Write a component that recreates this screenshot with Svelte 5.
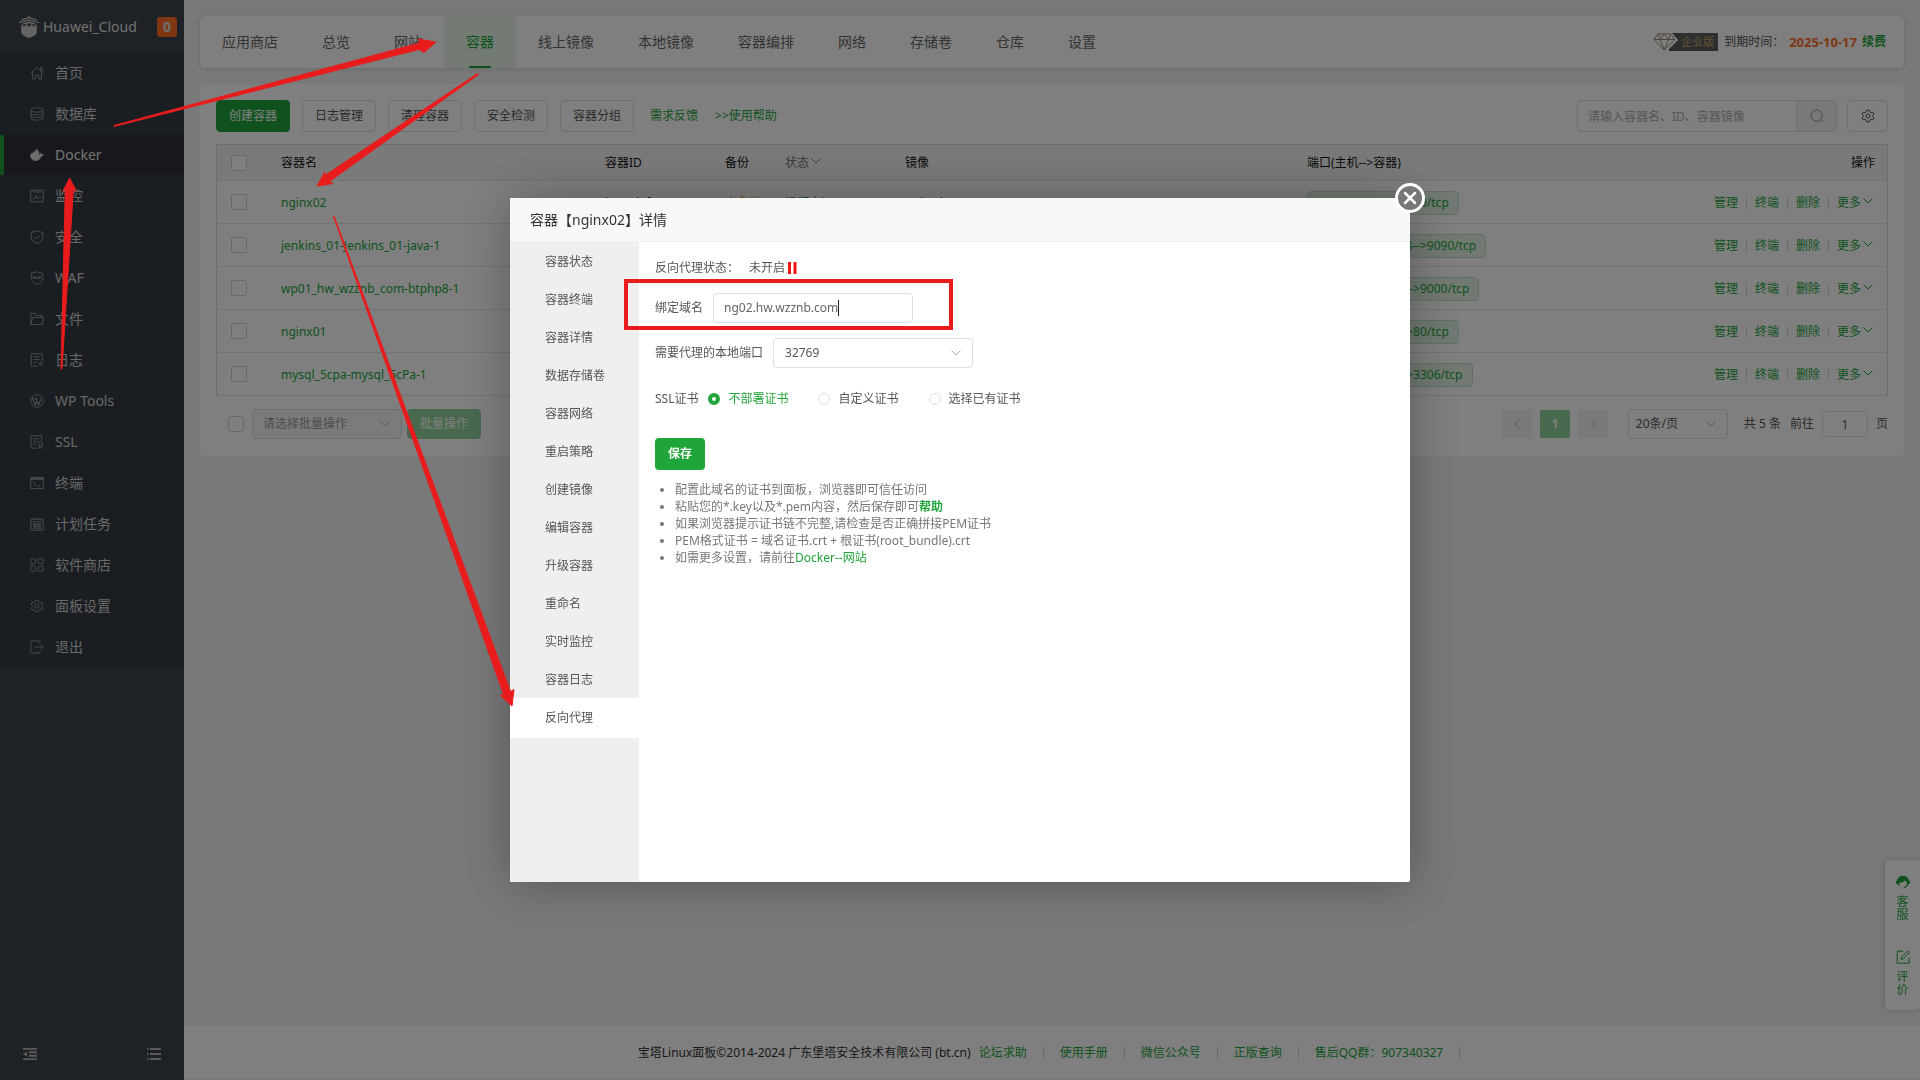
<script>
  const menu = [
    { name: '首页', icon: 'home' },
    { name: '数据库', icon: 'db' },
    { name: 'Docker', icon: 'docker', active: true },
    { name: '监控', icon: 'monitor' },
    { name: '安全', icon: 'shield' },
    { name: 'WAF', icon: 'waf' },
    { name: '文件', icon: 'folder' },
    { name: '日志', icon: 'log' },
    { name: 'WP Tools', icon: 'wp' },
    { name: 'SSL', icon: 'ssl' },
    { name: '终端', icon: 'terminal' },
    { name: '计划任务', icon: 'calendar' },
    { name: '软件商店', icon: 'apps' },
    { name: '面板设置', icon: 'gear' },
    { name: '退出', icon: 'exit' },
  ];
  const tabs = ['应用商店', '总览', '网站', '容器', '线上镜像', '本地镜像', '容器编排', '网络', '存储卷', '仓库', '设置'];
  const tools = ['日志管理', '清理容器', '安全检测', '容器分组'];
  const rows = [
    { name: 'nginx02', id: 'b1c7d0fa3e52', image: 'nginx:latest', port: '10.0.0.2:32769-->80/tcp' },
    { name: 'jenkins_01-Jenkins_01-java-1', id: '4e9a1c07d2b8', image: 'jenkins:lts', port: '127.0.0.10:32768-->9090/tcp' },
    { name: 'wp01_hw_wzznb_com-btphp8-1', id: '90ac3d5e71f4', image: 'btphp:8', port: '127.0.0.1:32770-->9000/tcp' },
    { name: 'nginx01', id: 'c25f80e9ab13', image: 'nginx:latest', port: '10.0.0.2:32768-->80/tcp' },
    { name: 'mysql_5cpa-mysql_5cPa-1', id: '7d63b0a4ce91', image: 'mysql:8', port: '10.0.0.2:33060-->3306/tcp' },
  ];
  const actions = ['管理', '终端', '删除'];
  const panes = ['容器状态', '容器终端', '容器详情', '数据存储卷', '容器网络', '重启策略', '创建镜像', '编辑容器', '升级容器', '重命名', '实时监控', '容器日志', '反向代理'];
  const certs = ['不部署证书', '自定义证书', '选择已有证书'];
  const footLinks = ['论坛求助', '使用手册', '微信公众号', '正版查询', '售后QQ群：907340327'];
  let domain = $state('ng02.hw.wzznb.com');
  let cert = $state('不部署证书');
</script>

{#snippet chevron()}
  <svg class="chev" viewBox="0 0 10 6" aria-hidden="true"><path d="M.5 .5 5 5 9.500 .5" /></svg>
{/snippet}

{#snippet gearIcon()}
  <path d="M5.8 1.2h2.4l.5 1.7 1.2.7 1.8-.5 1.2 2.1-1.3 1.2v1.3l1.3 1.2-1.2 2.1-1.8-.5-1.2.7-.5 1.7H5.8l-.5-1.7-1.2-.7-1.8.5-1.2-2.1 1.3-1.2V6.4L1.1 5.2l1.2-2.1 1.8.5 1.2-.7z" /><circle cx="7" cy="7" r="2" />
{/snippet}

<div class="page">
  <aside class="side">
    <header class="brand">
      <svg class="logo" viewBox="0 0 20 22" aria-hidden="true">
        <path d="M9.200 0h1.600v1.200L18 3.400v1L10 2.200 2 4.400v-1l7.200-2.200z" />
        <path d="M10 3.200 20 6v1.200L10 4.600 0 7.200V6z" />
        <path d="M10 5.600 16 7.200v1.400L10 7.200 4 8.600V7.200z" />
        <path d="M2.200 9 4.200 8.600v1.800h1.800V9l2.600-.8v2h2.800v-2L14 9v1.400h1.800V8.600l2 .4v7c0 2.800-3.400 4.400-7.800 6-4.400-1.600-7.800-3.200-7.800-6z" />
      </svg>
      <span class="host">Huawei_Cloud</span>
      <span class="count">0</span>
    </header>
    <nav class="menu">
      {#each menu as m}
        <a href="#menu" class:active={m.active}>
          <svg viewBox="0 0 14 14" aria-hidden="true" class:solid={m.icon === 'docker'}>
            {#if m.icon === 'home'}<path d="M.8 7.4 7 1.2l6.2 6.2M10.6 4.6V1.6h1.6v4.6M2.6 6v7h2.8V9h3.2v4h2.8V6" />
            {:else if m.icon === 'db'}<ellipse cx="7" cy="3" rx="6" ry="2.2" /><path d="M1 3v8c0 1.2 2.7 2.2 6 2.2s6-1 6-2.2V3M1 5.7c0 1.2 2.7 2.2 6 2.2s6-1 6-2.2M1 8.4c0 1.2 2.7 2.2 6 2.2s6-1 6-2.2" />
            {:else if m.icon === 'docker'}<path d="M0 6.600h1.400V4.800h2.200V3.200h2V1.200h2.200v2h1.400v3.400h.8c.5-.4.2-1.500.8-2 .8.600 1 1.200 1 1.800.7-.1 1.500 0 2.200.4-.5 1-1.500 1.400-2.500 1.400-1 2.900-2.900 4.700-6 4.700C2 12.900 0 10 0 6.600z" />
            {:else if m.icon === 'monitor'}<path d="M.8 1.200h12.400v11.600H.8zM4 1.200V3h6V1.200M2.600 9.600h2l1.400-3 1.600 3.400 1.600-2.600 1 1.200h1.400" />
            {:else if m.icon === 'shield'}<path d="M7 .7 12.800 2.600v5c0 2.700-2.300 4.600-5.800 5.800-3.500-1.200-5.800-3.100-5.800-5.800v-5zM4.300 6.900l2 2 3.600-3.600" />
            {:else if m.icon === 'waf'}<path d="M7 .7 12.800 2.600v5c0 2.700-2.300 4.600-5.800 5.800-3.500-1.200-5.800-3.100-5.800-5.800v-5zM3 5.400l.7 2.400.8-2 .8 2L6 5.400M6.600 8l1-2.600 1 2.600M9.600 8V5.600H11.200M9.600 6.800h1.300" />
            {:else if m.icon === 'folder'}<path d="M.8 12.600V1.400h4.400l1.400 2h5.200v2M.8 12.600 2.600 5.400h10.800l-1 7.200z" />
            {:else if m.icon === 'log'}<path d="M8 13.200H1.200V.8h11V8M3.400 3.800h6.400M3.400 6.600h6.400M3.400 9.400h3.800" /><circle cx="11" cy="10.800" r="1.500" />
            {:else if m.icon === 'wp'}<circle cx="7" cy="7" r="6.300" /><path class="thick" d="M2.400 4.400 5 11l2-5.400M5.400 4.400 8.600 11l2.600-6.600M1.800 4.400h2M4.800 4.400h2.600" />
            {:else if m.icon === 'ssl'}<path d="M7 13.200H1V.8h10.600v5M3 3.800h6.400M3 6.400h4.800M3 9h3.400" /><circle cx="10.600" cy="8.800" r="2" /><path d="M9.400 10.600v2.800l1.200-.8 1.400.8v-2.800" />
            {:else if m.icon === 'terminal'}<path d="M.8 1.400h12.400v11.200H.8zM.8 3.400h12.400M.8 2.400h12.400M3.600 5.800l2.200 1.800-2.200 1.800M6.800 10h3.600" />
            {:else if m.icon === 'calendar'}<path d="M.8 2.200h12.400v11H.8zM4 .6v2M7 .6v2M10 .6v2M.8 4.800h12.400M3 7.200h8M3 9.200h8M3 11.200h8M4.600 6v6M7.200 6v6M9.800 6v6" />
            {:else if m.icon === 'apps'}<rect x=".8" y=".8" width="5" height="5" rx="1" /><rect x="8.200" y=".8" width="5" height="5" rx="1" /><rect x=".8" y="8.200" width="5" height="5" rx="1" /><rect x="8.200" y="8.200" width="5" height="5" rx="1" />
            {:else if m.icon === 'gear'}{@render gearIcon()}
            {:else}<path d="M9.800 3.600V1.800c0-.6-.4-1-1-1H1.800c-.6 0-1 .4-1 1v10.400c0 .6.400 1 1 1h7c.6 0 1-.4 1-1v-1.800M5 7h8M10.600 4.400 13.200 7l-2.600 2.600" />{/if}
          </svg>
          {m.name}
        </a>
      {/each}
    </nav>
    <div class="side-foot">
      <button aria-label="收起菜单"><svg viewBox="0 0 14 12" aria-hidden="true"><path d="M0 .8h14M6 4.300h8M6 7.700h8M0 11.200h14" /><path class="tri" d="M0 6 4 3.600v4.800z" /></svg></button>
      <button aria-label="菜单列表"><svg viewBox="0 0 14 12" aria-hidden="true"><path d="M0 1h1.600M3 1h11M0 6h1.600M3 6h11M0 11h1.600M3 11h11" /></svg></button>
    </div>
  </aside>

  <main class="main">
    <div class="card topbar">
      <nav class="tabs">
        {#each tabs as t}<a href="#tab" class:active={t === '容器'}>{t}</a>{/each}
      </nav>
      <div class="license">
        <span class="edition">
          <svg viewBox="0 0 24 18" aria-hidden="true"><path class="halo" d="M5 1h13l5 6-11 11L1 7z" /><path d="M5 1h12.500l4.500 5.500L11.300 17 1 6.500zM1 6.500h21M7 6.500 11.300 17 15.600 6.500M5 1l2 5.500L11.300 1l4.300 5.500 2-5.500" /></svg>
          <span>企业版</span>
        </span>
        <span>到期时间：</span>
        <strong class="date">2025-10-17</strong>
        <a class="renew" href="#renew">续费</a>
      </div>
    </div>

    <section class="card content">
      <div class="tools">
        <button class="btn primary">创建容器</button>
        {#each tools as t}<button class="btn">{t}</button>{/each}
        <a class="help" href="#feedback">需求反馈</a>
        <a class="help" href="#help">&gt;&gt;使用帮助</a>
        <div class="search">
          <div class="query">
            <input type="text" aria-label="搜索容器" placeholder="请输入容器名、ID、容器镜像" />
            <button aria-label="搜索"><svg viewBox="0 0 14 14" aria-hidden="true"><circle cx="6.600" cy="6.600" r="5.600" /><path d="M10.800 10.800 13 13" /></svg></button>
          </div>
          <button class="btn square" aria-label="设置"><svg viewBox="0 0 14 14" aria-hidden="true">{@render gearIcon()}</svg></button>
        </div>
      </div>

      <div class="table-box">
        <table>
          <colgroup><col class="c-check" /><col class="c-name" /><col class="c-id" /><col class="c-backup" /><col class="c-state" /><col class="c-image" /><col /></colgroup>
          <thead>
            <tr>
              <th><input type="checkbox" aria-label="全选" /></th>
              <th>容器名</th><th>容器ID</th><th>备份</th>
              <th class="soft">状态{@render chevron()}</th>
              <th>镜像</th>
              <th><div class="split"><span>端口(主机--&gt;容器)</span><span>操作</span></div></th>
            </tr>
          </thead>
          <tbody>
            {#each rows as r}
              <tr>
                <td><input type="checkbox" aria-label={'选择 ' + r.name} /></td>
                <td><a href="#detail">{r.name}</a></td>
                <td class="dark">{r.id}</td>
                <td class="orange">未备份</td>
                <td><a href="#state">运行中▶</a></td>
                <td class="dark">{r.image}</td>
                <td>
                  <div class="split">
                    <span class="port">{r.port}</span>
                    <span class="acts">
                      {#each actions as a}<a href="#action">{a}</a><i></i>{/each}
                      <a class="more" href="#more">更多{@render chevron()}</a>
                    </span>
                  </div>
                </td>
              </tr>
            {/each}
          </tbody>
        </table>
      </div>

      <div class="below">
        <input type="checkbox" aria-label="全选本页" />
        <div class="select batch">
          <select aria-label="批量操作类型" disabled><option>请选择批量操作</option></select>
          {@render chevron()}
        </div>
        <button class="btn primary faded" disabled>批量操作</button>
        <div class="pager">
          <button class="pg" aria-label="上一页"><svg viewBox="0 0 6 10" aria-hidden="true"><path d="M5 .8 1 5l4 4.200" /></svg></button>
          <button class="pg now">1</button>
          <button class="pg" aria-label="下一页"><svg viewBox="0 0 6 10" aria-hidden="true"><path d="M1 .8 5 5 1 9.200" /></svg></button>
          <div class="select size">
            <select aria-label="每页条数"><option>20条/页</option></select>
            {@render chevron()}
          </div>
          <span class="total">共 5 条</span>
          <label>前往 <input type="text" value="1" /> 页</label>
        </div>
      </div>
    </section>

    <footer class="foot">
      <span>宝塔Linux面板©2014-2024 广东堡塔安全技术有限公司 (bt.cn)</span>
      {#each footLinks as l}<a href="#foot">{l}</a><i></i>{/each}
    </footer>
  </main>
</div>

<div class="float">
  <a href="#service">
    <svg viewBox="0 0 14 14" aria-hidden="true"><path class="fill" d="M7 .8c3.200 0 5.400 1.900 5.800 4.400.8.300 1.200 1 1.200 2s-.6 1.900-1.600 2C11.600 11.400 10 13 7.600 13.200v-1c1.500-.3 2.600-1.400 3.100-2.800l.3-2.600C9.800 6.800 9 6.400 8.600 5.600 7.400 7 5.600 7.800 3.200 8c0 1.200.3 2 .8 2.800C2.700 10.400 1.900 9.900 1.600 9.200.6 9.100 0 8.200 0 7.200s.4-1.700 1.200-2C1.600 2.700 3.800.8 7 .8z" /></svg>
    <span>客服</span>
  </a>
  <a href="#rate">
    <svg viewBox="0 0 14 14" aria-hidden="true"><path d="M7 1.200H1.200v12h12V7.400M5 9.400l.5-2.300L11.600 1l1.700 1.700-6.100 6.200z" /></svg>
    <span>评价</span>
  </a>
</div>

<div class="mask">
  <div class="dialog" role="dialog" aria-labelledby="dlg-title">
    <h2 id="dlg-title">容器【nginx02】详情</h2>
    <button class="close" aria-label="关闭"><svg viewBox="0 0 14 14" aria-hidden="true"><path d="M2 2 12 12M12 2 2 12" /></svg></button>
    <div class="body">
      <nav class="panes">
        {#each panes as p}<a href="#pane" class:active={p === '反向代理'}>{p}</a>{/each}
      </nav>
      <form class="form" onsubmit={(e) => e.preventDefault()}>
        <div class="line"><span>反向代理状态：</span><span class="off">未开启<svg viewBox="0 0 10 12" aria-hidden="true"><path d="M1 0h3v12H1zM6.500 0h3v12h-3z" /></svg></span></div>
        <div class="line">
          <label for="domain">绑定域名</label>
          <span class="box"><input id="domain" type="text" bind:value={domain} /><i class="caret"></i></span>
        </div>
        <div class="line">
          <label for="port">需要代理的本地端口</label>
          <div class="select port-pick">
            <select id="port"><option>32769</option></select>
            {@render chevron()}
          </div>
        </div>
        <div class="line ssl">
          <span>SSL证书</span>
          <div class="radios">
            {#each certs as c}
              <label class:on={cert === c}><input type="radio" name="cert" value={c} bind:group={cert} />{c}</label>
            {/each}
          </div>
        </div>
        <button class="save">保存</button>
        <ul>
          <li>配置此域名的证书到面板，浏览器即可信任访问</li>
          <li>粘贴您的*.key以及*.pem内容，然后保存即可<a href="#cert-help"><b>帮助</b></a></li>
          <li>如果浏览器提示证书链不完整,请检查是否正确拼接PEM证书</li>
          <li>PEM格式证书 = 域名证书.crt + 根证书(root_bundle).crt</li>
          <li>如需更多设置，请前往<a href="#sites">Docker--网站</a></li>
        </ul>
      </form>
    </div>
  </div>
</div>

<svg class="marks" viewBox="0 0 1920 1080" aria-hidden="true">
  <path d="M114 126.500 419 49.500 424 52.500 436 42 418.500 39 419.500 43 114 125.500z" />
  <path d="M477.500 73.500 324 176 325 171.500 317 186 333 183.500 329.500 181.500 478.500 74.500z" />
  <path d="M61 369 65.300 190 63 191 69.700 178 76.300 191 73.300 190 62 369z" />
  <path d="M334 216 510.500 691.500 514 689.500 512 706 500 695 504 695.500 333.500 216.500z" />
  <rect x="626" y="281" width="325" height="47" />
</svg>

<style>
  :global(body) { margin: 0; background: #f2f2f2; }
  .page, .float, .mask { font-family: "Noto Sans", "Noto Sans CJK SC", sans-serif; font-size: 12px; line-height: 18px; color: #555; }
  .page *, .float *, .mask * { box-sizing: border-box; }
  a { color: #20a53a; text-decoration: none; }
  button, input, select { font: inherit; color: inherit; margin: 0; }
  svg { fill: none; stroke: currentColor; stroke-width: 1; flex: none; }
  i { display: block; width: 1px; height: 12px; background: #d4d4d4; }

  .page { display: flex; min-height: 100vh; }
  .side { width: 184px; flex: none; display: flex; flex-direction: column; background: #3c444d; }
  .brand { height: 53px; display: flex; align-items: center; padding: 0 7px 0 19px; box-sizing: border-box; color: #e0e0e0; font-size: 14px; }
  .logo { width: 20px; height: 22px; fill: #c8c8c8; stroke: none; margin-right: 4px; }
  .count { margin-left: auto; width: 20px; height: 20px; border-radius: 3px; background: #fc6d26; font-weight: 700; line-height: 20px; text-align: center; }
  .menu { background: #353d44; padding-bottom: 1px; display: flex; flex-direction: column; gap: 1px; }
  .menu a { height: 40px; display: flex; align-items: center; gap: 11px; padding-left: 26px; border-left: 4px solid transparent; color: #d0d0d0; font-size: 14px; }
  .menu a svg { width: 14px; height: 14px; color: #8e9398; }
  .menu a .thick { stroke-width: 1.300; }
  .menu a.active { background: #2c3138; border-color: #20a53a; color: #e8e8e8; }
  .menu svg.solid { fill: #d8d8d8; stroke: none; }
  .side-foot { margin-top: auto; height: 54px; border-top: 1px solid #434b54; display: flex; justify-content: space-between; align-items: center; padding: 0 23px; }
  .side-foot button { border: 0; background: none; padding: 0; display: flex; color: #b4b4b4; }
  .side-foot svg { width: 14px; height: 12px; stroke-width: 2; }
  .side-foot .tri { fill: currentColor; stroke: none; }

  .main { flex: 1; min-width: 0; display: flex; flex-direction: column; }
  .card { background: #fff; border-radius: 6px; margin: 16px 16px 0; }
  .topbar { display: flex; justify-content: space-between; height: 52px; box-shadow: 0 1px 4px rgba(0, 0, 0, .12); }
  .tabs { display: flex; font-size: 14px; line-height: 52px; }
  .tabs a { padding: 0 22px; color: #666; }
  .tabs a.active { color: #20a53a; background: #e9f6eb; border-radius: 6px; display: flex; flex-direction: column; align-items: center; height: 52px; }
  .tabs a.active::after { content: ''; flex: none; width: 22px; height: 2px; margin-top: -2px; background: #20a53a; }
  .license { display: flex; align-items: center; padding-right: 18px; }
  .edition { display: grid; grid-template-columns: 16px 49px; align-items: center; margin-right: 6px; }
  .edition svg { grid-area: 1 / 1; width: 24px; height: 18px; color: #9d8a6e; z-index: 1; overflow: visible; }
  .edition .halo { fill: #fff; stroke: #fff; stroke-width: 3; }
  .edition span { grid-area: 1 / 2; height: 18px; background: #5c5c5c; color: #c4a870; font-size: 11px; line-height: 18px; padding-left: 12px; white-space: nowrap; }
  .date { color: #fc6d26; font-size: 13px; margin: 0 5px; }
  .renew { font-weight: 700; }

  .content { padding: 16px 16px 17px; }
  .tools { display: flex; align-items: center; gap: 12px; }
  .btn { height: 32px; padding: 0 12px; border: 1px solid #dcdfe6; border-radius: 4px; background: #fff; color: #555; white-space: nowrap; }
  .primary { background: #20a53a; border-color: #20a53a; color: #fff; }
  .help { margin: 0 1px 0 4px; }
  .search { margin-left: auto; display: flex; gap: 10px; }
  .query { display: flex; }
  .query input { width: 220px; height: 32px; border: 1px solid #dcdfe6; border-radius: 4px 0 0 4px; background: none; padding: 0 10px; outline: none; }
  .query input::placeholder { color: #a8abb2; }
  .query button { width: 40px; height: 32px; border: 1px solid #dcdfe6; border-left: 0; border-radius: 0 4px 4px 0; background: #f0f2f5; color: #8c8f96; display: grid; place-items: center; padding: 0; }
  .query svg, .square svg { width: 14px; height: 14px; }
  .square { width: 41px; padding: 0; display: grid; place-items: center; }

  input[type='checkbox'] { appearance: none; display: block; width: 16px; height: 16px; border: 1px solid #d0d2d6; border-radius: 2px; background: #fff; }
  .table-box { margin-top: 12px; border: 1px solid #dcdcdc; border-bottom: 0; }
  table { width: 100%; table-layout: fixed; border-collapse: separate; border-spacing: 0; }
  .c-check { width: 52px; } .c-name { width: 324px; } .c-id { width: 120px; } .c-backup { width: 60px; } .c-state { width: 120px; } .c-image { width: 402px; }
  th, td { padding: 0 12px; border-bottom: 1px solid #e6e6e6; text-align: left; white-space: nowrap; }
  th { height: 36px; background: #f5f5f5; color: #111; font-weight: 400; }
  th.soft { color: #777; }
  td { height: 43px; padding-top: 2px; }
  th:first-child, td:first-child { padding: 0 14px; }
  .dark { color: #222; }
  .orange { color: #f0a020; }
  .split { display: flex; align-items: center; justify-content: space-between; }
  .port { height: 24px; line-height: 22px; padding: 0 9px; border: 1px solid #bfe3c5; border-radius: 4px; background: #e4f3e6; color: #20a53a; }
  .acts { display: flex; align-items: center; gap: 8px; }
  .chev { display: inline-block; width: 10px; height: 6px; margin: 0 2px 3px; }

  .below { display: flex; align-items: center; padding: 13px 0 0 12px; }
  .select { display: grid; align-items: center; }
  .select select { grid-area: 1 / 1; width: 100%; height: 30px; padding: 0 10px; appearance: none; border: 1px solid #dcdfe6; border-radius: 4px; background: #fff; outline: none; opacity: 1; }
  .select .chev { grid-area: 1 / 1; justify-self: end; margin: 0 12px 0 0; color: #a8abb2; pointer-events: none; z-index: 1; }
  .batch { width: 150px; margin: 0 5px 0 8px; }
  .batch select { background: #f5f7fa; color: #999; }
  .faded { height: 30px; background: #90d29d; border-color: #90d29d; }
  .size { width: 100px; margin: 0 16px 0 12px; }
  .size select { padding: 0 7px; }
  .pager { margin-left: auto; display: flex; align-items: center; }
  .pg { width: 30px; height: 28px; margin-right: 8px; border: 0; border-radius: 2px; background: #f2f3f6; color: #a8abb2; display: grid; place-items: center; padding: 0; }
  .pg svg { width: 6px; height: 10px; }
  .now { background: #90d29d; color: #fff; font-weight: 700; }
  .total { margin-right: 9px; }
  .pager label { display: flex; align-items: center; gap: 8px; }
  .pager input { width: 46px; height: 26px; border: 1px solid #dcdfe6; border-radius: 4px; text-align: center; background: #fff; padding: 0; }

  .foot { margin: auto 0 2px; height: 52px; background: #fff; display: flex; align-items: center; justify-content: center; gap: 16px; padding: 2px 6px 0 0; box-sizing: border-box; color: #333; }
  .foot span { margin-right: -8px; }

  .float { position: fixed; right: 0; top: 860px; width: 35px; height: 150px; box-sizing: border-box; padding: 15px 0 14px; background: #fff; border-radius: 4px; box-shadow: 0 0 6px rgba(0, 0, 0, .2); display: flex; flex-direction: column; justify-content: space-between; align-items: center; }
  .float a { width: 14px; display: grid; gap: 6px; justify-items: center; line-height: 13px; }
  .float span { width: 12px; }
  .float svg { width: 14px; height: 14px; }
  .float .fill { fill: currentColor; stroke: none; }

  .mask { position: fixed; inset: 0; z-index: 10; display: grid; place-items: center; background: rgba(0, 0, 0, .5); }
  .dialog { position: relative; width: 900px; height: 684px; background: #fff; border-radius: 2px; box-shadow: 1px 1px 50px rgba(0, 0, 0, .3); display: flex; flex-direction: column; }
  h2 { margin: 0; height: 44px; flex: none; padding: 0 20px; border-bottom: 1px solid #eee; background: #f8f8f8; color: #333; font-size: 14px; font-weight: 400; line-height: 43px; }
  .close { position: absolute; right: -15px; top: -15px; width: 30px; height: 30px; padding: 0; border: 3px solid #fff; border-radius: 50%; background: #777; color: #fff; display: grid; place-items: center; }
  .close svg { width: 14px; height: 14px; stroke-width: 2.500; stroke-linecap: round; }
  .body { flex: 1; display: flex; min-height: 0; }
  .panes { width: 129px; background: #efefef; }
  .panes a { display: block; height: 40px; line-height: 40px; margin-bottom: -2px; padding-left: 35px; color: #555; }
  .panes a.active { background: #fff; }
  .form { flex: 1; padding: 16px; color: #555; }
  .line { display: flex; align-items: center; gap: 10px; min-height: 30px; margin-bottom: 15px; }
  .line:first-child { min-height: 20px; }
  .off { display: flex; align-items: center; gap: 2px; }
  .off svg { width: 10px; height: 12px; fill: #f01414; stroke: none; }
  .box { width: 200px; height: 30px; border: 1px solid #dcdfe6; border-radius: 4px; display: flex; align-items: center; padding: 0 10px; }
  .box input { field-sizing: content; border: 0; padding: 0; outline: none; background: none; color: #666; }
  .caret { height: 16px; background: #222; }
  .port-pick { width: 200px; }
  .port-pick select { padding: 0 11px; }
  .ssl { margin-top: 16px; margin-bottom: 24px; }
  .radios { display: flex; gap: 30px; }
  .radios label { display: flex; align-items: center; gap: 8px; }
  .radios .on { color: #20a53a; }
  input[type='radio'] { appearance: none; width: 12px; height: 12px; border: 1px solid #dcdfe6; border-radius: 50%; background: #fff; }
  input[type='radio']:checked { border: 4px solid #20a53a; }
  .save { width: 50px; height: 32px; padding: 0; border: 0; border-radius: 4px; background: #20a53a; color: #fff; font-weight: 700; display: block; }
  ul { margin: 11px 0 0; padding-left: 20px; color: #777; line-height: 17px; }

  .marks { position: fixed; left: 0; top: 0; z-index: 20; width: 1920px; height: 1080px; pointer-events: none; }
  .marks path { fill: #e81c1c; stroke: #e81c1c; stroke-width: 1; }
  .marks rect { stroke: #e81c1c; stroke-width: 4; }
</style>
